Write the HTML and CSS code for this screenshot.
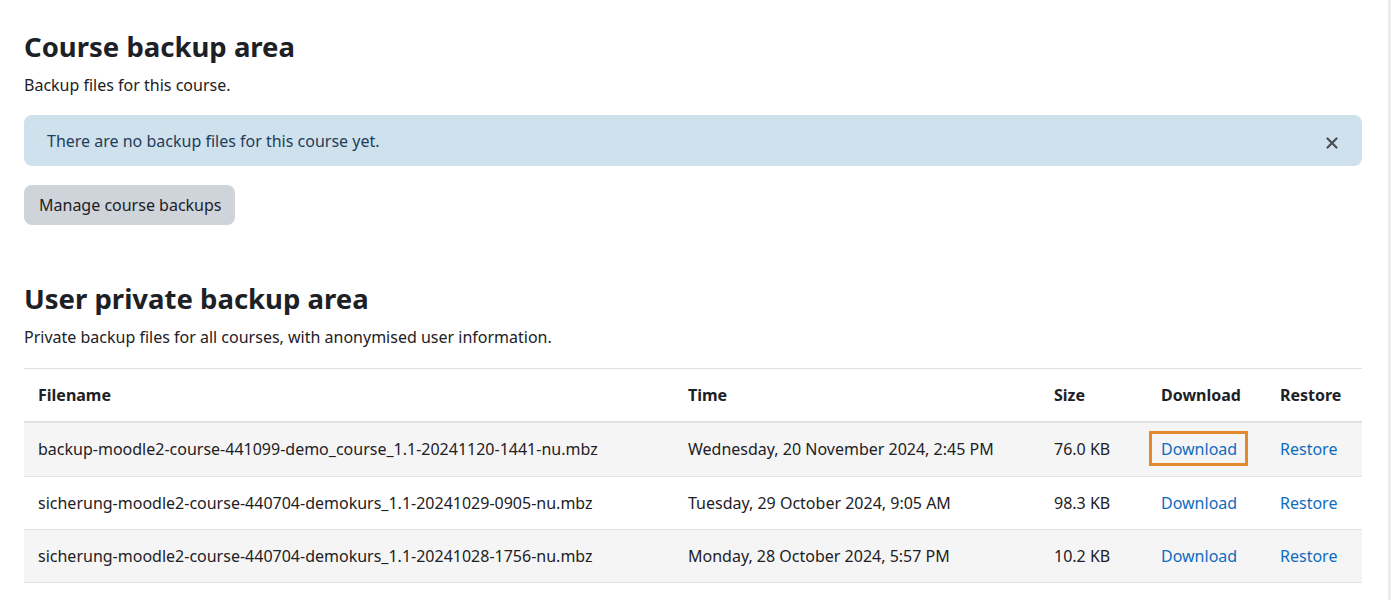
FILE: index.html
```html
<!DOCTYPE html>
<html lang="en">
<head>
<meta charset="utf-8">
<title>Backup areas</title>
<link rel="stylesheet" href="styles.css">
</head>
<body>
<div class="page">
  <main class="content">
    <section class="area">
      <h2 class="heading">Course backup area</h2>
      <p class="desc">Backup files for this course.</p>
      <div class="alert">
        <span>There are no backup files for this course yet.</span>
        <button class="close" aria-label="Dismiss">
          <svg width="12" height="12" viewBox="0 0 12 12"><path d="M1.5 1.5 L10.5 10.5 M10.5 1.5 L1.5 10.5" stroke="#4a4f54" stroke-width="2.2" stroke-linecap="round"/></svg>
        </button>
      </div>
      <button class="btn">Manage course backups</button>
    </section>
    <section class="area second">
      <h2 class="heading">User private backup area</h2>
      <p class="desc">Private backup files for all courses, with anonymised user information.</p>
      <table class="files">
        <colgroup>
          <col class="c1"><col class="c2"><col class="c3"><col class="c4"><col class="c5">
        </colgroup>
        <thead>
          <tr><th>Filename</th><th>Time</th><th>Size</th><th>Download</th><th>Restore</th></tr>
        </thead>
        <tbody>
          <tr class="odd first"><td>backup-moodle2-course-441099-demo_course_1.1-20241120-1441-nu.mbz</td><td>Wednesday, 20 November 2024, 2:45 PM</td><td>76.0 KB</td><td><a href="#" class="link focus">Download</a></td><td><a href="#" class="link">Restore</a></td></tr>
          <tr><td>sicherung-moodle2-course-440704-demokurs_1.1-20241029-0905-nu.mbz</td><td>Tuesday, 29 October 2024, 9:05 AM</td><td>98.3 KB</td><td><a href="#" class="link">Download</a></td><td><a href="#" class="link">Restore</a></td></tr>
          <tr class="odd"><td>sicherung-moodle2-course-440704-demokurs_1.1-20241028-1756-nu.mbz</td><td>Monday, 28 October 2024, 5:57 PM</td><td>10.2 KB</td><td><a href="#" class="link">Download</a></td><td><a href="#" class="link">Restore</a></td></tr>
        </tbody>
      </table>
    </section>
  </main>
  <div class="edge"></div>
</div>
</body>
</html>
```

FILE: styles.css
```css
* { box-sizing: border-box; }
html, body { margin: 0; padding: 0; background: #fff; }
body {
  font-family: "Segoe UI", "Noto Sans", "Liberation Sans", sans-serif;
  font-size: 16px;
  color: #1d2125;
  overflow: hidden;
}
.page { display: flex; height: 600px; }
.content { flex: 1; padding: 26px 26px 0 24px; }
.edge { width: 3px; background: #ececec; }
.heading {
  margin: 0;
  font-size: 27.5px;
  font-weight: 700;
  line-height: 42px;
}
.desc { margin: 6px 0 0; line-height: 22px; }
.alert {
  margin-top: 19px;
  height: 51px;
  background: #cfe1ed;
  color: #1f3d5a;
  border-radius: 8px;
  display: flex;
  align-items: center;
  justify-content: space-between;
  padding: 0 24px 0 23px;
}
.close { background: none; border: 0; padding: 0; margin-top: 4px; display: flex; }
.btn {
  margin-top: 19px;
  font: inherit;
  color: #1d2125;
  background: #ced4da;
  border: 0;
  border-radius: 8px;
  height: 40px;
  padding: 0 13px 0 15px;
}
.second { margin-top: 53px; }
.files {
  margin-top: 20px;
  width: 100%;
  border-collapse: collapse;
  table-layout: fixed;
}
.c1 { width: 650px; } .c2 { width: 366px; } .c3 { width: 107px; } .c4 { width: 119px; } .c5 { width: 96px; }
.files th, .files td {
  text-align: left;
  padding: 0 0 0 14px;
  white-space: nowrap;
  border-top: 1px solid #dee2e6;
  line-height: 22px;
}
.files th { font-weight: 700; height: 53px; border-bottom: 2px solid #dee2e6; }
.files td { height: 53px; border-bottom: 1px solid #dee2e6; }
.files tr.first td { height: 55px; }
.files tr.odd td { background: #f5f5f5; }
.link { color: #0f6cbf; text-decoration: none; }
.focus {
  outline: 3px solid #e5892f;
  outline-offset: 0;
  padding: 4px 8px 3px 9px;
  margin-left: -9px;
}
```
